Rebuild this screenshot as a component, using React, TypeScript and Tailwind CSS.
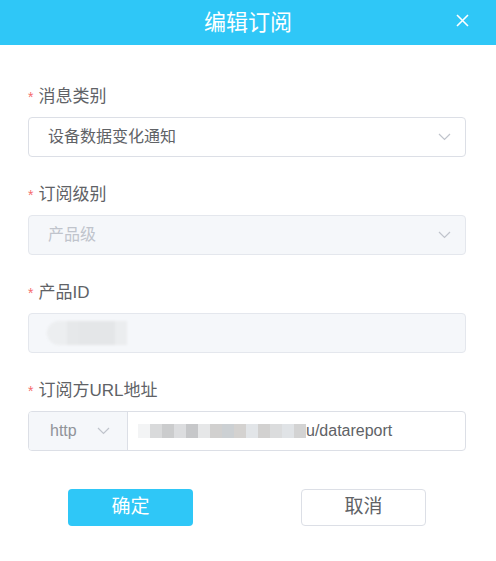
const Chevron = ({ className = "" }: { className?: string }) => (
  <svg width="13" height="8" viewBox="0 0 13 8" className={className}>
    <path d="M1 1 L6.5 6.5 L12 1" fill="none" stroke="#c0c4cc" strokeWidth="1.2" />
  </svg>
);

const Label = ({ text }: { text: string }) => (
  <div className="h-6 flex items-center text-[17px] text-[#606266] leading-6">
    <span className="text-[#f56c6c] mr-[5px] text-[14px]">*</span>
    {text}
  </div>
);

const urlBlocks = [
  "#f3f4f5", "#d9dadb", "#cbcccd", "#dcdddf", "#c6c7c9", "#e6e7e8", "#d1d0cf",
  "#ccd0d3", "#d4d2d0", "#e2e5e8", "#d2d1d0", "#dbdcdd", "#e0e3e6", "#d3d3d3",
];

export default function App() {
  return (
    <div
      className="w-[496px] h-[561px] bg-white flex flex-col"
      style={{ fontFamily: '"Liberation Sans", "Noto Sans CJK SC", sans-serif' }}
    >
      <header className="h-[45px] bg-[#2fc7f7] relative flex items-center justify-center">
        <span className="text-white text-[22px]">编辑订阅</span>
        <svg width="13" height="13" viewBox="0 0 13 13" className="absolute left-[456px] top-[14px]">
          <path d="M1 1 L12 12 M12 1 L1 12" stroke="white" strokeWidth="1.6" />
        </svg>
      </header>

      <section className="px-[28px] pt-[40px] flex flex-col">
        <Label text="消息类别" />
        <div className="mt-[8px] h-[40px] w-[438px] border border-[#dcdfe6] rounded-[4px] flex items-center justify-between pl-[19px] pr-[14px]">
          <span className="text-[16px] text-[#606266]">设备数据变化通知</span>
          <Chevron />
        </div>

        <div className="mt-[26px]">
          <Label text="订阅级别" />
        </div>
        <div className="mt-[8px] h-[40px] w-[438px] border border-[#e4e7ed] bg-[#f5f7fa] rounded-[4px] flex items-center justify-between pl-[19px] pr-[14px]">
          <span className="text-[16px] text-[#c0c4cc]">产品级</span>
          <Chevron />
        </div>

        <div className="mt-[26px]">
          <Label text="产品ID" />
        </div>
        <div className="mt-[8px] h-[40px] w-[438px] border border-[#e4e7ed] bg-[#f5f7fa] rounded-[4px] flex items-center pl-[18px]">
          <div className="flex h-[24px] rounded-l-[12px] overflow-hidden blur-[1px]">
            <div className="w-[20px] bg-[#eceef0]" />
            <div className="w-[12px] bg-[#e6e8ea]" />
            <div className="w-[36px] bg-[#e4e6e8]" />
            <div className="w-[12px] bg-[#ebedef]" />
          </div>
        </div>

        <div className="mt-[26px]">
          <Label text="订阅方URL地址" />
        </div>
        <div className="mt-[8px] h-[40px] w-[438px] border border-[#dcdfe6] rounded-[4px] flex overflow-hidden">
          <div className="w-[99px] bg-[#f5f7fa] border-r border-[#dcdfe6] flex items-center pl-[21px] gap-[20px]">
            <span className="text-[16px] text-[#909399]">http</span>
            <Chevron />
          </div>
          <div className="flex-1 flex items-center pl-[10px]">
            <div className="flex h-[14px] blur-[0.5px]">
              {urlBlocks.map((c, i) => (
                <div key={i} className="w-[12px]" style={{ backgroundColor: c }} />
              ))}
            </div>
            <span className="text-[16px] text-[#606266]">u/datareport</span>
          </div>
        </div>

        <div className="mt-[38px] flex">
          <button className="ml-[40px] w-[125px] h-[37px] bg-[#2fc7f7] rounded-[4px] text-white text-[19px]">
            确定
          </button>
          <button className="ml-[108px] w-[125px] h-[37px] bg-white border border-[#dcdfe6] rounded-[4px] text-[#606266] text-[19px]">
            取消
          </button>
        </div>
      </section>
    </div>
  );
}
